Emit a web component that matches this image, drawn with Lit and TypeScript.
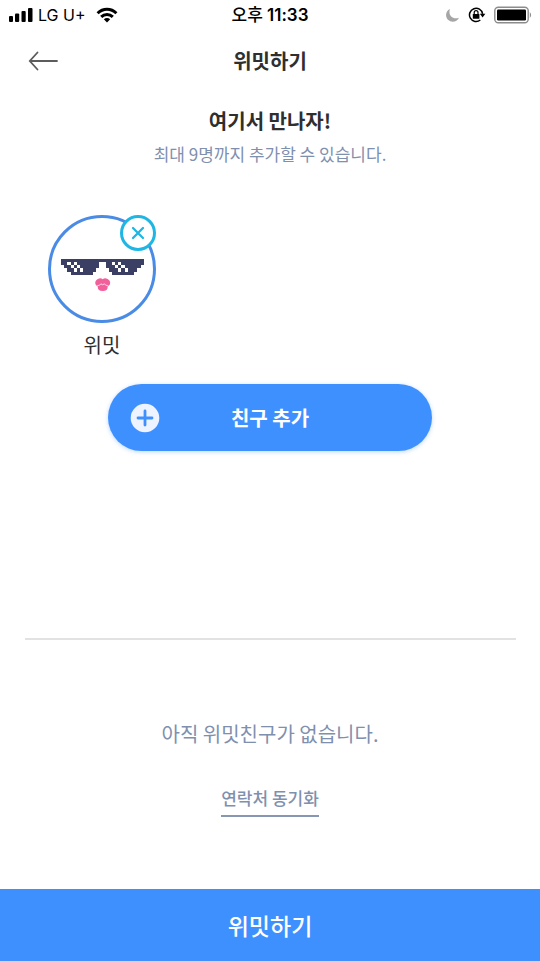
import { LitElement, html, svg, css } from "lit";
import { customElement, property, state } from "lit/decorators.js";

// Dark runs of each pixel row of the sunglasses: [column, row, width]
const FRAME: [number, number, number][] = [
  [0, 0, 26],
  [0, 1, 2], [3, 1, 1], [5, 1, 7], [14, 1, 2], [17, 1, 1], [19, 1, 7],
  [1, 2, 2], [4, 2, 1], [6, 2, 6], [14, 2, 3], [18, 2, 1], [20, 2, 5],
  [2, 3, 2], [5, 3, 1], [7, 3, 4], [15, 3, 3], [19, 3, 1], [21, 3, 3],
  [3, 4, 7], [16, 4, 7],
];

@customElement("status-bar")
class StatusBar extends LitElement {
  static styles = css`
    :host {
      display: grid;
      grid-template-columns: 1fr auto 1fr;
      align-items: center;
      height: 30px;
      padding: 0 8px;
      color: #000;
      font: 16px/20px Inter, "Noto Sans CJK KR", sans-serif;
    }
    .side { display: flex; align-items: center; gap: 4px; }
    .end { justify-content: flex-end; gap: 8px; }
    .time { font-size: 17px; font-weight: 600; }
    .half { font-weight: 500; }
    .wifi { margin-left: 6px; }
    svg { display: block; }
  `;

  render() {
    return html`
      <div class="side">
        <svg width="26" height="16" viewBox="0 0 26 16" aria-hidden="true">
          <rect x="1" y="9" width="4" height="6" rx="1" />
          <rect x="7" y="6.5" width="4.2" height="8.5" rx="1" />
          <rect x="13.5" y="4" width="4.2" height="11" rx="1" />
          <rect x="20" y="1" width="4.5" height="14" rx="1" />
        </svg>
        <span>LG U+</span>
        <svg class="wifi" width="22" height="16" viewBox="0 0 22 16" aria-hidden="true">
          <g fill="none" stroke="#000" stroke-width="3">
            <path d="M1.6 6.3C7 .9 15 .9 20.4 6.3" />
            <path d="M5.2 9.9C8.5 6.7 13.5 6.7 16.8 9.9" />
          </g>
          <path d="M7.8 12.2C9.7 10.5 12.3 10.5 14.2 12.2L11 15.4Z" />
        </svg>
      </div>
      <span class="time"><span class="half">오후</span> 11:33</span>
      <div class="side end">
        <svg width="15" height="15" viewBox="0 0 15 15" aria-hidden="true">
          <path fill="#a6a6a6" d="M5 1C.6 2.8-.2 8.5 3 11.8C6.3 15 12 14.2 14 9.8C7.5 12 2.8 7.3 5 1Z" />
        </svg>
        <svg width="18" height="16" viewBox="0 0 18 16" aria-hidden="true">
          <path d="M12.3 13A6.6 6.6 0 1 1 14.6 6.8" fill="none" stroke="#000" stroke-width="1.5" />
          <path d="M11.8 6.8H17.4L14.6 10.5Z" />
          <rect x="4.8" y="7" width="6.6" height="4.8" rx=".6" />
          <path d="M6.2 7V5.6a1.9 1.9 0 0 1 3.8 0V7" fill="none" stroke="#000" stroke-width="1.2" />
        </svg>
        <svg width="38" height="18" viewBox="0 0 38 18" aria-hidden="true">
          <rect x=".8" y="1.3" width="33.4" height="15.4" rx="3.5" fill="none" stroke="#8c8c8c" stroke-width="1.4" />
          <rect x="3" y="3.5" width="29" height="11" rx="1.2" />
          <path d="M35.8 6q2.6 3 0 6z" fill="#8c8c8c" />
        </svg>
      </div>
    `;
  }
}

@customElement("friend-avatar")
class FriendAvatar extends LitElement {
  @property() name = "";

  static styles = css`
    :host { display: block; width: 108px; }
    .ring {
      position: relative;
      box-sizing: border-box;
      height: 108px;
      border: 3px solid #4a8be6;
      border-radius: 50%;
      background: #fff;
    }
    .face { display: block; width: 100%; height: 100%; }
    .remove {
      position: absolute;
      top: -3px;
      right: -3px;
      display: grid;
      place-items: center;
      box-sizing: border-box;
      width: 36px;
      height: 36px;
      padding: 0;
      border: 3px solid #1fb6e4;
      border-radius: 50%;
      background: #fff;
      cursor: pointer;
    }
    .name {
      margin: 8px 0 0;
      color: #2f2f2f;
      font-size: 20px;
      line-height: 28px;
      text-align: center;
    }
  `;

  render() {
    const frame = FRAME.map(([x, y, w]) => `M${x} ${y}h${w}v1h${-w}z`).join("");
    return html`
      <div class="ring">
        <svg class="face" viewBox="0 0 102 102" aria-hidden="true">
          ${svg`<path
            d=${frame}
            transform="translate(10 40.7) scale(3.18 3.2)"
            fill="#3b3f63"
            shape-rendering="crispEdges"
          />`}
          <path fill="#f2609b" d="M48 60.5Q50.3 59.9 51.7 61.3Q53.1 59.9 55.4 60.5Q59.1 61.5 59.2 65Q59 68 56.7 68.5Q56.9 73 51.7 73T46.7 68.5Q44.4 68 44.2 65Q44.3 61.5 48 60.5Z" />
          <path fill="none" stroke="#ffd3e4" stroke-width="1" stroke-linecap="round" d="M46.5 67.8Q49.6 67.3 49.9 65.8Q51.7 67.8 53.5 65.8Q53.8 67.3 56.9 67.8" />
        </svg>
        <button class="remove" type="button" aria-label="${this.name} 삭제">
          <svg width="14" height="14" viewBox="0 0 14 14" aria-hidden="true">
            <path d="M2 2L12 12M12 2L2 12" stroke="#1fb6e4" stroke-width="2.3" stroke-linecap="round" />
          </svg>
        </button>
      </div>
      <p class="name">${this.name}</p>
    `;
  }
}

@customElement("app-root")
class AppRoot extends LitElement {
  @state() private friends = ["위밋"];

  static styles = css`
    :host {
      display: flex;
      flex-direction: column;
      min-height: 100vh;
      background: #fff;
      color: #2f2f2f;
      font-family: "Noto Sans CJK KR", sans-serif;
    }
    button { border: 0; font-family: inherit; cursor: pointer; }
    h1, h2, p { margin: 0; }
    .nav {
      display: grid;
      grid-template-columns: 1fr auto 1fr;
      align-items: center;
      height: 62px;
      padding: 0 28px;
    }
    .back {
      justify-self: start;
      padding: 0;
      background: none;
    }
    .back svg { display: block; }
    h1, h2 { font-size: 20px; line-height: 28px; font-weight: 700; }
    main { display: flex; flex-direction: column; flex: 1; }
    .intro { margin-top: 15px; text-align: center; }
    .intro p {
      margin-top: 7px;
      color: #7f90ae;
      font-size: 17px;
      line-height: 24px;
    }
    .friends {
      display: flex;
      flex-wrap: wrap;
      gap: 24px;
      padding: 49px 48px 0;
    }
    .add {
      display: grid;
      grid-template-columns: 1fr auto 1fr;
      align-items: center;
      align-self: center;
      width: 60%;
      height: 67px;
      margin-top: 25px;
      padding: 0 22px;
      border-radius: 34px;
      background: #3f90ff;
      box-shadow: 0 1px 4px #3f90ff59;
      color: #fff;
      font-size: 20px;
      line-height: 28px;
      font-weight: 700;
    }
    hr {
      width: calc(100% - 49px);
      height: 2px;
      margin: 187px auto 0;
      border: 0;
      background: #e2e2e2;
    }
    .empty {
      display: flex;
      flex-direction: column;
      align-items: center;
      gap: 38px;
      margin: 80px 0 48px;
      color: #7f90ae;
      font-size: 20px;
      line-height: 28px;
    }
    .sync {
      padding-bottom: 5px;
      border-bottom: 2px solid #8797b3;
      color: #7f90ae;
      font-size: 17px;
      line-height: 24px;
      font-weight: 500;
      text-decoration: none;
    }
    .submit {
      height: 72px;
      background: #3f90ff;
      color: #fff;
      font-size: 23px;
      line-height: 28px;
      font-weight: 500;
    }
  `;

  render() {
    return html`
      <status-bar></status-bar>
      <header class="nav">
        <button class="back" type="button" aria-label="뒤로">
          <svg width="30" height="20" viewBox="0 0 30 20" aria-hidden="true">
            <path d="M29 10H2M9.5 1.5L1.8 10L9.5 18.5" fill="none" stroke="#5c5c5c" stroke-width="1.8" stroke-linecap="round" />
          </svg>
        </button>
        <h1>위밋하기</h1>
      </header>
      <main>
        <section class="intro">
          <h2>여기서 만나자!</h2>
          <p>최대 9명까지 추가할 수 있습니다.</p>
        </section>
        <section class="friends">
          ${this.friends.map((name) => html`<friend-avatar .name=${name}></friend-avatar>`)}
        </section>
        <button class="add" type="button">
          <svg width="30" height="30" viewBox="0 0 30 30" aria-hidden="true">
            <circle cx="15" cy="15" r="14.3" fill="#edf4ff" />
            <path d="M15 8V22M8 15H22" stroke="#3f90ff" stroke-width="2.8" stroke-linecap="round" />
          </svg>
          <span>친구 추가</span>
        </button>
        <hr />
        <section class="empty">
          <p>아직 위밋친구가 없습니다.</p>
          <a class="sync" href="#sync">연락처 동기화</a>
        </section>
      </main>
      <button class="submit" type="button">위밋하기</button>
    `;
  }
}
